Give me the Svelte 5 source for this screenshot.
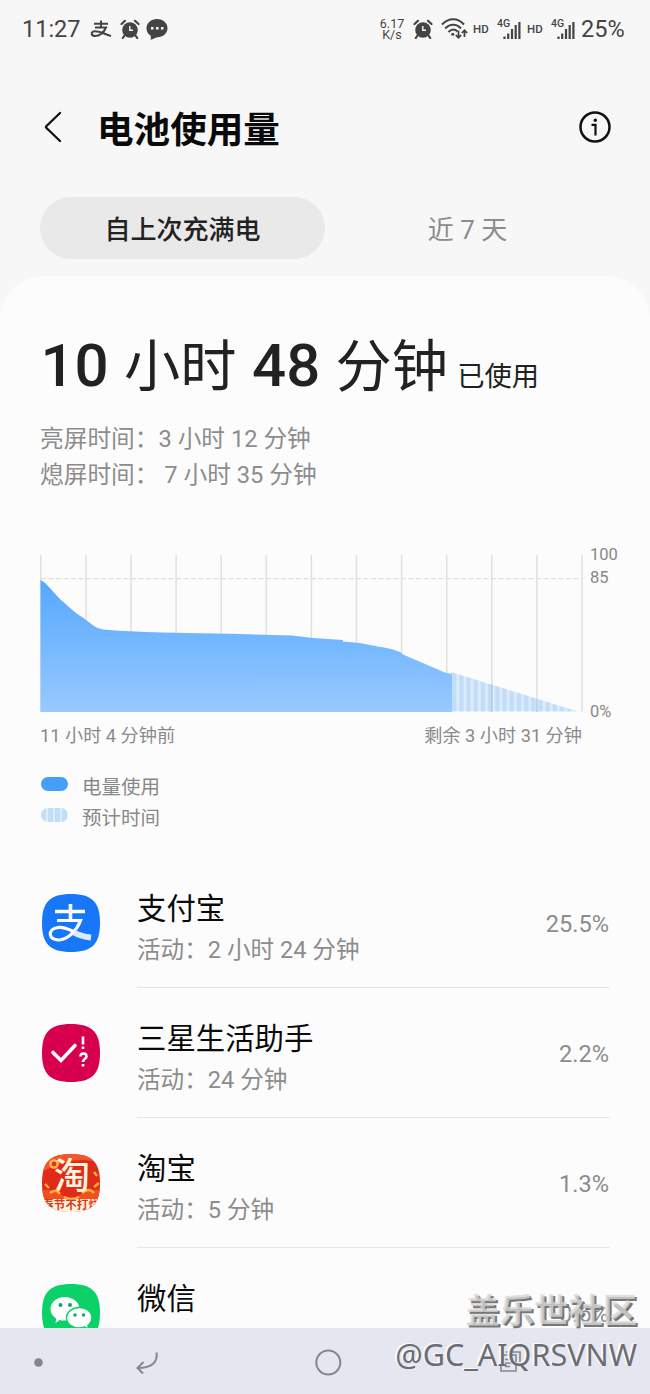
<script lang="ts">
  type App = { id: string; name: string; active: string; percent: string };

  const apps: App[] = [
    { id: 'alipay', name: '支付宝', active: '活动：2 小时 24 分钟', percent: '25.5%' },
    { id: 'bixby', name: '三星生活助手', active: '活动：24 分钟', percent: '2.2%' },
    { id: 'taobao', name: '淘宝', active: '活动：5 分钟', percent: '1.3%' },
    { id: 'wechat', name: '微信', active: '', percent: '0.6%' },
  ];

  const gridLines = Array.from({ length: 13 }, (_, i) => 0.8 + i * 45.1);

  // Top edge of the estimated area at x.
  const estimateTop = (x: number) => 118 + ((x - 411) / 127) * 39.5;

  const squircle = 'M29 0C50 0 58 8 58 29S50 58 29 58 0 50 0 29 8 0 29 0Z';
</script>

{#snippet alarm()}
  <svg class="alarm" width="20" height="20" viewBox="0 0 20 20" aria-hidden="true">
    <circle cx="10" cy="11" r="7.800" fill="#444" />
    <path d="M1.500 5 5 1.800M18.500 5 15 1.800M4.500 16.500 2.800 19M15.500 16.500 17.200 19" stroke="#444" stroke-width="2.200" stroke-linecap="round" />
    <path d="M9.800 7V11.300H13" fill="none" stroke="#f7f7f7" stroke-width="1.400" />
  </svg>
{/snippet}

{#snippet signal()}
  <span class="signal">
    <small>4G</small>
    <svg width="19" height="18" viewBox="0 0 19 18" aria-hidden="true">
      <path d="M2.500 15.500V18M6.200 12.500V18M10 8V18M13.700 4V18M17.400 1V18" stroke="#444" stroke-width="2.200" />
    </svg>
  </span>
{/snippet}

<div class="screen">
  <header class="status">
    <span class="clock">11:27</span>
    <svg class="pay" width="22" height="18" viewBox="0 0 22 18" fill="none" stroke="#444" stroke-width="2" aria-hidden="true">
      <path d="M4 3.800H18M11 .5V7.500M5 7.500H16C14.500 11 11 15.500 5.500 16C.5 16 .5 11.200 5 11.200C10 11.200 14 14 21 16" />
    </svg>
    {@render alarm()}
    <svg class="chat" width="22" height="21" viewBox="0 0 22 21" aria-hidden="true">
      <path d="M11 0C17 0 21.500 4 21.500 9.200S17 18 11.500 18.200C9 18.500 7 20.500 4.500 20.800C5.200 19.500 5 18 4.500 16.500C2 15 .5 12.500 .5 9.200C.5 4 5 0 11 0Z" fill="#444" />
      <path d="M5 8H7.500V10.500H5ZM10 8H12.500V10.500H10ZM15 8H17.500V10.500H15Z" fill="#f7f7f7" />
    </svg>
    <span class="speed">6.17<br />K/s</span>
    {@render alarm()}
    <svg class="wifi" width="27" height="22" viewBox="0 0 27 22" fill="none" stroke="#444" stroke-width="2" aria-hidden="true">
      <path d="M1 6.500C7.500 -.5 17 -.5 23 6.500M4.200 10.500C9 5.500 15.500 5.500 20 10.500M7.500 14C10.500 11 14 11 16.500 13.500" />
      <circle cx="11.800" cy="16.300" r="1.500" fill="#444" stroke="none" />
      <path d="M17.500 12.500V19.500M14.800 17 17.500 19.800 20.200 17M23.500 19V12.500M20.800 15 23.500 12.200 26.200 15" stroke-width="1.800" />
    </svg>
    <b class="hd">HD</b>
    {@render signal()}
    <b class="hd second">HD</b>
    {@render signal()}
    <span class="level">25%</span>
  </header>

  <div class="titlebar">
    <svg width="18" height="32" viewBox="0 0 18 32" fill="none" stroke="#111" stroke-width="2.300" stroke-linecap="round" stroke-linejoin="round" aria-hidden="true">
      <path d="M16 2 2.500 15Q1.500 16 2.500 17L16 30" />
    </svg>
    <h1>电池使用量</h1>
    <svg width="32" height="32" viewBox="0 0 32 32" fill="none" stroke="#111" stroke-width="2.500" aria-hidden="true">
      <circle cx="16" cy="16" r="14.500" />
      <path d="M12.500 13.800H16.500V24.500" stroke-width="2.200" />
      <circle cx="16.300" cy="9.300" r="1.700" fill="#111" stroke="none" />
    </svg>
  </div>

  <div class="tabs">
    <button type="button" class="active">自上次充满电</button>
    <button type="button">近 7 天</button>
  </div>

  <main>
    <div class="total"><b>10</b> 小时 <b>48</b> 分钟 <small>已使用</small></div>
    <p class="detail">亮屏时间：3 小时 12 分钟</p>
    <p class="detail">熄屏时间： 7 小时 35 分钟</p>

    <div class="chart">
      <svg width="544" height="158" viewBox="0 0 544 158" aria-hidden="true">
        <defs>
          <linearGradient id="used" x1="0" y1="0" x2="0" y2="1">
            <stop offset="0" stop-color="#55a8ff" />
            <stop offset="1" stop-color="#98c9ff" />
          </linearGradient>
          <pattern id="stripes" width="7.200" height="10" patternUnits="userSpaceOnUse">
            <rect width="7.200" height="10" fill="#dcedfd" />
            <rect x="1.500" width="4.500" height="10" fill="#c3ddf9" />
          </pattern>
        </defs>
        {#each gridLines as x}
          <path d="M{x} 1V158" stroke="#e0e0e1" stroke-width="1.500" />
        {/each}
        <path d="M1 24.700H543" stroke="#dedede" stroke-width="1.300" stroke-dasharray="5 2.500" />
        <path d="M411 118 538 157.500H411Z" fill="url(#stripes)" />
        {#each gridLines.slice(10, 12) as x}
          <path d="M{x} {estimateTop(x)}V158" stroke="#a9bfd8" stroke-opacity=".7" stroke-width="1.500" />
        {/each}
        <path
          d="M.5 26C5 28 9 33 13 37.500C17 42 20 45.500 24 48.500C29 53 34 58 42 63L54 72Q58 75 63 75.500Q88 77.500 122 78.500L200 80L252 81.500L273 84L303 86V87.500L320 89C334 92 345 93.500 353 95.500Q359 97 363 100.500L405 118.500L412 120V158H.5Z"
          fill="url(#used)"
        />
      </svg>
      <div class="scale">
        <span>100</span>
        <span>85</span>
        <span class="zero">0%</span>
      </div>
    </div>
    <div class="range">
      <span>11 小时 4 分钟前</span>
      <span>剩余 3 小时 31 分钟</span>
    </div>

    <ul class="legend">
      <li><i></i>电量使用</li>
      <li><i class="estimate"></i>预计时间</li>
    </ul>

    <ul class="apps">
      {#each apps as app (app.id)}
        <li>
          <svg class="logo" width="58" height="58" viewBox="0 0 58 58" aria-hidden="true">
            {#if app.id === 'alipay'}
              <path d={squircle} fill="#1777f8" />
              <g fill="none" stroke="#fff">
                <path d="M13 17.500H43M28.500 10V27" stroke-width="3.600" />
                <path d="M15 26.500H38.500C35 36 27 45 17.500 46C6 46.500 5 35 16 33.500C26 32 34 41 48 43" stroke-width="3.200" />
                <path d="M32 38.500Q39 42.500 49 43.500" stroke="#d9ebff" stroke-width="6" />
              </g>
            {:else if app.id === 'bixby'}
              <path d={squircle} fill="#d6004f" />
              <path d="M11 28.500 19 36.500 33 21.500" fill="none" stroke="#fff" stroke-width="3.600" stroke-linecap="round" />
              <path d="M41 12.500V20.500M41 22.500V25M38.500 32.500C38.500 28.500 44.500 28.500 44.500 32.500C44.500 35 41 34.500 41 38M41 40V42.500" fill="none" stroke="#fff" stroke-width="2.600" />
            {:else if app.id === 'taobao'}
              <clipPath id="tb"><path d={squircle} /></clipPath>
              <g clip-path="url(#tb)">
                <rect width="58" height="58" fill="#e02a1a" />
                <path d="M0 0H58V9Q32 0 0 18Z" fill="#f2562b" />
                <circle cx="12" cy="10" r="3.600" fill="#e5301b" stroke="#ffb94f" stroke-width="2.400" />
                <path d="M0 36Q12 35 20 41Q29 47 38 41Q47 35 58 36V46H0Z" fill="#f04f1f" />
                <path d="M3 30l4 4M8 39q6-5 10 1M22 43q7 4 15 0M40 39q7-6 12 0M52 18l3 4M52 33l5-4" stroke="#ffb332" stroke-width="2.400" fill="none" />
                <rect y="45" width="58" height="13" fill="#fff3df" />
              </g>
              <text class="tao" x="30" y="34.500">淘</text>
              <text class="promo" x="29" y="55" clip-path="url(#tb)">春节不打烊</text>
            {:else}
              <path d={squircle} fill="#0bd268" />
              <path d="M22.500 13C31 13 37.500 18 37.500 25S31 36.500 22.500 36.500Q20 36.500 17.500 36L13.500 39L14.200 34.500C10.500 32 8.500 29 8.500 25C8.500 18 15 13 22.500 13Z" fill="#fff" />
              <path d="M37 23.500C44.500 23.500 50 28 50 34Q50 38 46 41.500L46.500 45L42.500 43Q40 44 37 44C30 44 24.500 39.500 24.500 34S30 23.500 37 23.500Z" fill="#fff" stroke="#0bd268" stroke-width="1.500" />
              <g fill="#0ba956">
                <circle cx="18.500" cy="21" r="2" />
                <circle cx="28" cy="21" r="2" />
                <circle cx="33" cy="31" r="1.700" />
                <circle cx="41.500" cy="31" r="1.700" />
              </g>
            {/if}
          </svg>
          <div class="info">
            <div>
              <h2>{app.name}</h2>
              <p>{app.active}</p>
            </div>
            <span>{app.percent}</span>
          </div>
        </li>
      {/each}
    </ul>
  </main>

  <nav>
    <svg width="650" height="66" viewBox="0 0 650 66" fill="none" stroke="#85868d" stroke-width="2" aria-hidden="true">
      <circle cx="38.500" cy="34.500" r="4.300" fill="#85868d" stroke="none" />
      <path d="M156.500 24.500C158 34 152 40 138 40M143.500 34 137.500 40 143 45.500" />
      <circle cx="328.300" cy="34.500" r="12" />
      <path d="M506 24H520V39M501 27H516V43H501V27M505 31.500H513M505 35H513M505 38.500H510" stroke-width="1.600" />
    </svg>
  </nav>

  <div class="watermark">
    <strong>盖乐世社区</strong>
    <span>@GC_AIQRSVNW</span>
  </div>
</div>

<style>
  :global(body) {
    background: #f7f7f7;
  }
  .screen {
    position: relative;
    display: flex;
    flex-direction: column;
    width: 650px;
    height: 1394px;
    overflow: hidden;
    background: #f7f7f7;
    font-family: Roboto, 'Noto Sans CJK SC', sans-serif;
    color: #222;
  }
  h1, h2, p, ul {
    margin: 0;
    padding: 0;
    font-weight: 400;
    list-style: none;
  }
  svg {
    display: block;
    flex: none;
  }

  .status {
    display: flex;
    align-items: center;
    height: 58px;
    padding-left: 22px;
    color: #444;
    white-space: nowrap;
  }
  .clock, .level {
    font-size: 23.5px;
  }
  .clock {
    width: 68px;
  }
  .pay {
    margin-right: 8px;
  }
  .chat {
    margin-left: 6px;
  }
  .speed {
    width: 28px;
    margin-left: 210px;
    margin-right: 7px;
    font-size: 12.5px;
    line-height: 11.5px;
    text-align: center;
  }
  .wifi {
    margin-left: 8px;
  }
  .hd {
    width: 17px;
    margin-left: 5px;
    font-size: 11.5px;
    font-weight: 500;
  }
  .signal {
    display: flex;
    align-items: flex-end;
    width: 24px;
    height: 20px;
    margin-left: 7px;
  }
  .signal small {
    align-self: flex-start;
    width: 5px;
    font-size: 10.5px;
    font-weight: 500;
    line-height: 9px;
  }
  .hd.second {
    margin-left: 6px;
  }
  .level {
    margin-left: 6px;
  }

  .titlebar {
    display: flex;
    align-items: center;
    height: 138px;
    padding: 0 39px 0 44px;
    box-sizing: border-box;
  }
  h1 {
    flex: 1;
    margin-left: 35px;
    padding-top: 8px;
    font-size: 36.6px;
    font-weight: 700;
    line-height: 54px;
    color: #0a0a0a;
  }

  .tabs {
    display: flex;
    height: 62px;
    padding: 0 40px;
    margin-top: 1px;
  }
  .tabs button {
    flex: 1;
    padding: 5px 0 0;
    border: 0;
    border-radius: 31px;
    background: none;
    font: 400 26px/57px Roboto, 'Noto Sans CJK SC', sans-serif;
    color: #8c8c8c;
  }
  .tabs .active {
    background: #e9e9e9;
    font-weight: 500;
    color: #222;
  }

  main {
    flex: 1;
    margin-top: 17px;
    padding: 50px 40px 0;
    border-radius: 44px 44px 0 0;
    background: #fcfcfc;
    min-height: 0;
    overflow: hidden;
  }
  .total {
    height: 80px;
    font-size: 56.2px;
    line-height: 80px;
    white-space: nowrap;
    word-spacing: 1.3px;
  }
  .total b {
    margin-left: 0.5px;
    font-size: 60px;
    font-weight: 500;
  }
  .total small {
    margin-left: -6px;
    font-size: 27.3px;
  }
  .detail {
    font-size: 23.7px;
    line-height: 36px;
    color: #8c8c8c;
  }
  .total + .detail {
    margin-top: 15px;
  }

  .chart {
    display: flex;
    margin-top: 61px;
  }
  .scale {
    display: flex;
    flex-direction: column;
    height: 180px;
    margin: -11px 0 -11px 6px;
    font-size: 16.5px;
    line-height: 23px;
    color: #888;
  }
  .scale .zero {
    margin-top: auto;
  }
  .range {
    display: flex;
    justify-content: space-between;
    width: 542px;
    margin-top: 9px;
    font-size: 18.2px;
    line-height: 30px;
    color: #8a8a8a;
  }

  .legend {
    margin-top: 21px;
    font-size: 19.5px;
    line-height: 31px;
    color: #888;
  }
  .legend li {
    display: flex;
    align-items: center;
  }
  .legend i {
    width: 27px;
    height: 14px;
    margin: -7px 14px 0 1px;
    border-radius: 7px;
    background: #459ff4;
  }
  .legend .estimate {
    background: repeating-linear-gradient(90deg, #c3ddf9 0 5px, #dcedfd 5px 7px);
  }

  .apps {
    margin-top: 24px;
  }
  .apps li {
    display: flex;
    height: 130px;
  }
  .logo {
    margin: 35.5px 37px 0 2px;
  }
  .info {
    display: flex;
    flex: 1;
    justify-content: space-between;
    align-items: center;
    padding-top: 2px;
    border-bottom: 1px solid #e6e6e6;
    box-sizing: border-box;
  }
  .info h2 {
    margin-top: 11px;
    font-size: 29.4px;
    line-height: 42px;
    color: #0a0a0a;
  }
  .info p,
  .info span {
    min-height: 40px;
    font-size: 23.6px;
    line-height: 40px;
    color: #8c8c8c;
  }
  .info span {
    margin-right: 1px;
  }
  .tao {
    font-size: 36px;
    font-weight: 500;
    text-anchor: middle;
    fill: #fff4dc;
  }
  .promo {
    font-size: 11.5px;
    font-weight: 700;
    text-anchor: middle;
    fill: #d63b1d;
  }

  nav {
    flex: none;
    height: 66px;
    background: #e4e6f0;
  }

  .watermark {
    position: absolute;
    right: 13px;
    bottom: 18px;
    display: flex;
    flex-direction: column;
    align-items: flex-end;
    white-space: nowrap;
  }
  .watermark strong {
    font-size: 34.3px;
    font-weight: 700;
    line-height: 42px;
    color: rgba(216, 216, 216, 0.8);
    text-shadow: 2px 2px 0 #777;
  }
  .watermark span {
    font-family: 'Noto Sans', sans-serif;
    font-size: 30.5px;
    line-height: 44px;
    color: #6c6d73;
    text-shadow: -2px -1px 0 #fafafa;
  }
</style>
